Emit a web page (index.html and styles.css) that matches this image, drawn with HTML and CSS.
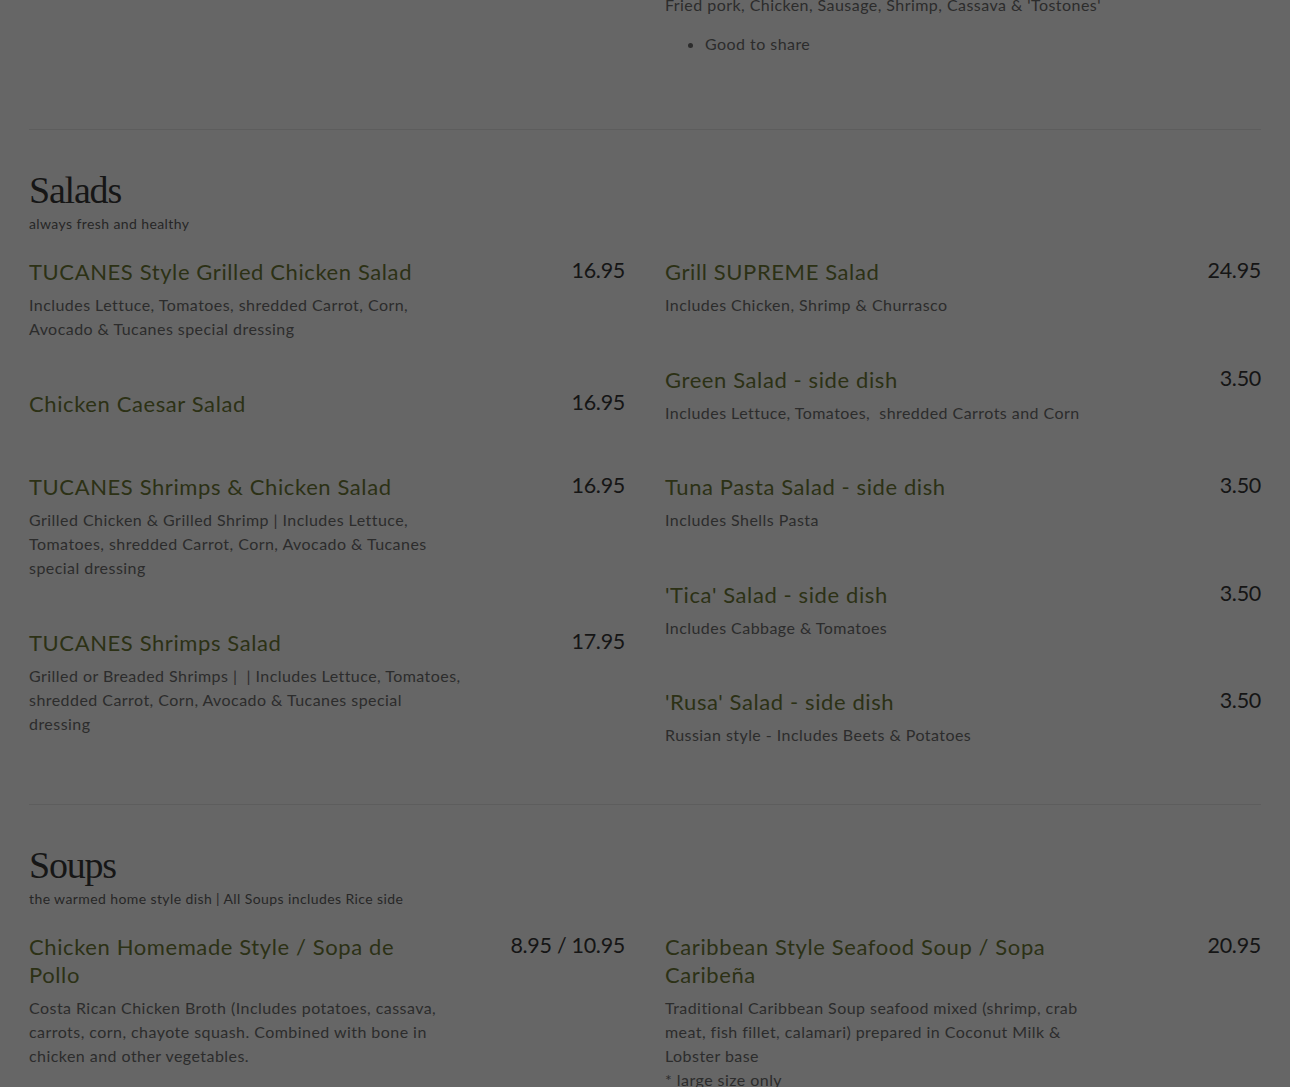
FILE: index.html
```html
<!DOCTYPE html>
<html lang="en">
<head>
<meta charset="utf-8">
<title>Menu</title>
<link rel="stylesheet" href="styles.css">
</head>
<body>
<div class="page">
  <section class="menu-section partial">
    <div class="grid">
      <div class="col"></div>
      <div class="col">
        <div class="item">
          <p class="desc desc-wide">Fried pork, Chicken, Sausage, Shrimp, Cassava &amp; 'Tostones'</p>
          <ul class="notes"><li>Good to share</li></ul>
        </div>
      </div>
    </div>
  </section>

  <hr class="divider">

  <section class="menu-section">
    <h2 class="section-title">Salads</h2>
    <p class="section-sub">always fresh and healthy</p>
    <div class="grid">
      <div class="col">
        <div class="item">
          <div class="item-head"><h3 class="item-title">TUCANES Style Grilled Chicken Salad</h3><span class="price">16.95</span></div>
          <p class="desc">Includes Lettuce, Tomatoes, shredded Carrot, Corn, Avocado &amp; Tucanes special dressing</p>
        </div>
        <div class="item">
          <div class="item-head"><h3 class="item-title">Chicken Caesar Salad</h3><span class="price">16.95</span></div>
          <p class="desc"></p>
        </div>
        <div class="item">
          <div class="item-head"><h3 class="item-title">TUCANES Shrimps &amp; Chicken Salad</h3><span class="price">16.95</span></div>
          <p class="desc">Grilled Chicken &amp; Grilled Shrimp | Includes Lettuce, Tomatoes, shredded Carrot, Corn, Avocado &amp; Tucanes special dressing</p>
        </div>
        <div class="item">
          <div class="item-head"><h3 class="item-title">TUCANES Shrimps Salad</h3><span class="price">17.95</span></div>
          <p class="desc">Grilled or Breaded Shrimps |&nbsp; | Includes Lettuce, Tomatoes, shredded Carrot, Corn, Avocado &amp; Tucanes special dressing</p>
        </div>
      </div>
      <div class="col">
        <div class="item">
          <div class="item-head"><h3 class="item-title">Grill SUPREME Salad</h3><span class="price">24.95</span></div>
          <p class="desc">Includes Chicken, Shrimp &amp; Churrasco</p>
        </div>
        <div class="item">
          <div class="item-head"><h3 class="item-title">Green Salad - side dish</h3><span class="price">3.50</span></div>
          <p class="desc">Includes Lettuce, Tomatoes,&nbsp; shredded Carrots and Corn</p>
        </div>
        <div class="item">
          <div class="item-head"><h3 class="item-title">Tuna Pasta Salad - side dish</h3><span class="price">3.50</span></div>
          <p class="desc">Includes Shells Pasta</p>
        </div>
        <div class="item">
          <div class="item-head"><h3 class="item-title">'Tica' Salad - side dish</h3><span class="price">3.50</span></div>
          <p class="desc">Includes Cabbage &amp; Tomatoes</p>
        </div>
        <div class="item">
          <div class="item-head"><h3 class="item-title">'Rusa' Salad - side dish</h3><span class="price">3.50</span></div>
          <p class="desc">Russian style - Includes Beets &amp; Potatoes</p>
        </div>
      </div>
    </div>
  </section>

  <hr class="divider">

  <section class="menu-section">
    <h2 class="section-title">Soups</h2>
    <p class="section-sub">the warmed home style dish | All Soups includes Rice side</p>
    <div class="grid">
      <div class="col">
        <div class="item">
          <div class="item-head"><h3 class="item-title">Chicken Homemade Style / Sopa de Pollo</h3><span class="price">8.95 / 10.95</span></div>
          <p class="desc">Costa Rican Chicken Broth (Includes potatoes, cassava, carrots, corn, chayote squash. Combined with bone in chicken and other vegetables.</p>
        </div>
      </div>
      <div class="col">
        <div class="item">
          <div class="item-head"><h3 class="item-title">Caribbean Style Seafood Soup / Sopa Caribeña</h3><span class="price">20.95</span></div>
          <p class="desc">Traditional Caribbean Soup seafood mixed (shrimp, crab meat, fish fillet, calamari) prepared in Coconut Milk &amp; Lobster base<br>* large size only</p>
        </div>
      </div>
    </div>
  </section>
</div>
</body>
</html>
```

FILE: styles.css
```css
* { box-sizing: border-box; }

html, body {
  margin: 0;
  padding: 0;
  background: #666666;
}

body {
  font-family: Lato, "Open Sans", "Liberation Sans", sans-serif;
  color: #2e2e2e;
  overflow: hidden;
}

.page {
  margin-top: -14px;
  padding: 0 29px;
}

.grid {
  display: grid;
  grid-template-columns: 596px 596px;
  column-gap: 40px;
  align-items: start;
}

.menu-section {
  padding-top: 38px;
  padding-bottom: 8.5px;
}

.menu-section.partial {
  padding-top: 0;
}

.divider {
  margin: 0;
  border: 0;
  border-top: 1px solid #5d5d5d;
  height: 0;
}

.section-title {
  margin: 0;
  font-family: "Liberation Serif", "DejaVu Serif", serif;
  font-weight: 400;
  font-size: 38px;
  line-height: 44px;
  letter-spacing: -1.2px;
  color: #161616;
}

.section-sub {
  margin: 2px 0 0;
  font-size: 14px;
  line-height: 20px;
  letter-spacing: 0.4px;
  color: #262626;
}

.section-sub + .grid {
  margin-top: 24px;
}

.item {
  margin-bottom: 48.5px;
}

.item-head {
  display: flex;
  justify-content: space-between;
  align-items: flex-start;
}

.item-title {
  margin: 0;
  max-width: 405px;
  font-size: 22px;
  font-weight: 400;
  line-height: 28px;
  letter-spacing: 0.6px;
  color: #2c3115;
}

.price {
  flex: none;
  font-size: 21.5px;
  line-height: 24px;
  letter-spacing: -0.3px;
  color: #151515;
}

.desc {
  margin: 0;
  padding-top: 7px;
  max-width: 434px;
  font-size: 16px;
  line-height: 24px;
  letter-spacing: 0.45px;
  color: #2c2c2c;
}

.desc-wide {
  max-width: none;
}

.notes {
  margin: 15px 0 0;
  padding: 0 0 16px 40px;
  font-size: 16px;
  line-height: 24px;
  letter-spacing: 0.45px;
  color: #2c2c2c;
}
```
